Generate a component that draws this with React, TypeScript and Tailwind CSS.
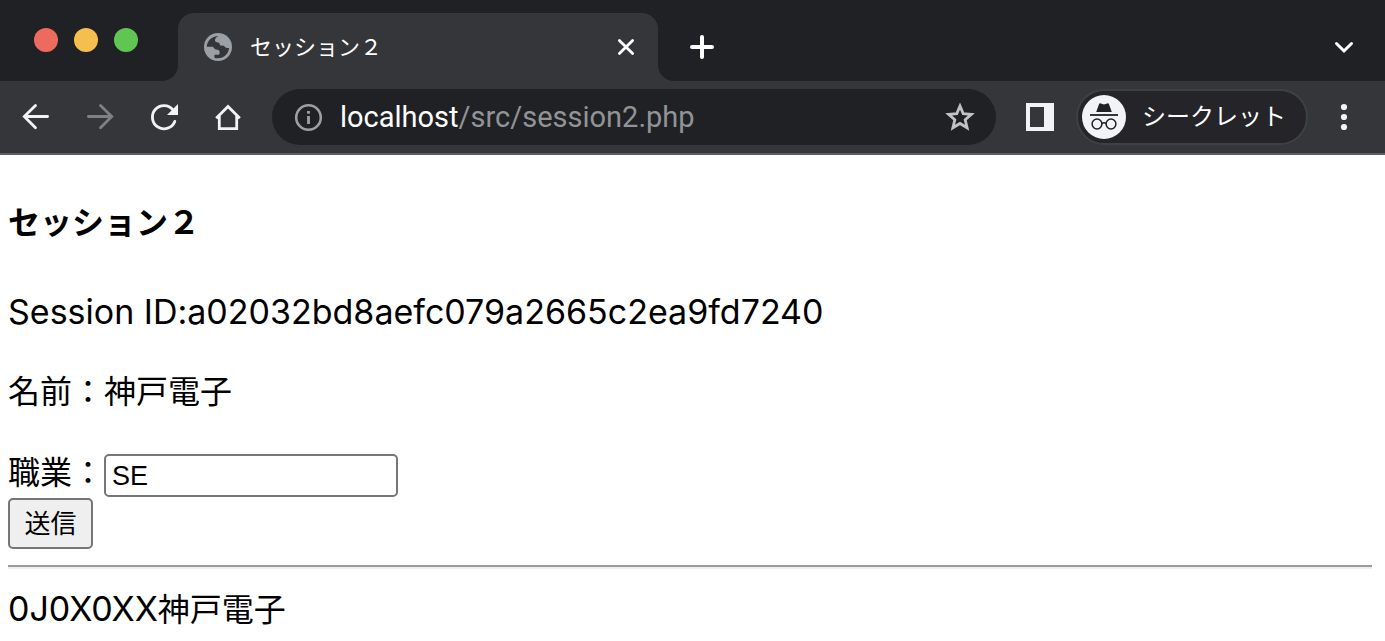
import type { ReactNode } from "react";

const chromeFont = "font-['Roboto','Noto_Sans_CJK_JP',sans-serif]";

function IconButton({ label, children }: { label: string; children: ReactNode }) {
  return (
    <button type="button" aria-label={label} className="flex size-8 shrink-0 items-center justify-center">
      {children}
    </button>
  );
}

function TabCurve({ side }: { side: "left" | "right" }) {
  return (
    <svg
      aria-hidden="true"
      viewBox="0 0 16 16"
      className={side === "left" ? "size-4 shrink-0 self-end" : "size-4 shrink-0 -scale-x-100 self-end"}
    >
      <path d="M16 0V16H0A16 16 0 0 0 16 0Z" fill="#35363a" />
    </svg>
  );
}

function Globe() {
  return (
    <svg aria-hidden="true" viewBox="0 0 28 28" className="size-7 shrink-0">
      <circle cx="14" cy="14" r="14" fill="#9aa0a6" />
      <path
        d="M2.8 13.7C2.8 8.4 7.6 3 14.6 3C12.4 4 11 5.4 11 7.2C11 8.6 12.2 9.4 14.2 9.4C16 9.5 15.2 12 17 12.6C18.4 13 19.6 12.2 20.6 13.4C21.6 14.6 23 15.2 25.1 15C24.6 20.6 20 25.3 13.6 25.2C12.4 25.2 11.4 25.1 10.4 24.7V21.8H13.4C15.6 21.8 15.8 20.6 15.6 18.9C15.4 17 14.2 16.6 12 16.4C10 16.2 10.2 13.7 8 13.7Z"
        fill="#35363a"
      />
    </svg>
  );
}

function Incognito() {
  return (
    <svg aria-hidden="true" viewBox="0 0 44 44" className="size-11 shrink-0">
      <circle cx="22" cy="22" r="22" fill="#f1f3f4" />
      <path d="M14.2 17L17 9.2C17.3 8.4 18 8.2 18.8 8.5L22 9.4L25.2 8.5C26 8.2 26.7 8.4 27 9.2L29.8 17Z" fill="#202124" />
      <g fill="none" stroke="#202124">
        <path d="M8 20H36" strokeWidth="1.8" />
        <circle cx="15" cy="29" r="4.9" strokeWidth="1.5" />
        <circle cx="29" cy="29" r="4.9" strokeWidth="1.5" />
        <path d="M19.8 28.6Q22 27 24.2 28.6" strokeWidth="1.5" />
      </g>
    </svg>
  );
}

function TabStrip() {
  return (
    <div className="flex h-[81px] bg-[#202124]">
      <div className="flex gap-4 pt-7 pr-6 pl-[34px]">
        <button type="button" aria-label="閉じる" className="size-6 rounded-full bg-[#ed6a5e]" />
        <button type="button" aria-label="最小化" className="size-6 rounded-full bg-[#f5bf4f]" />
        <button type="button" aria-label="最大化" className="size-6 rounded-full bg-[#61c554]" />
      </div>
      <TabCurve side="left" />
      <div className="mt-[13px] flex w-[480px] items-center rounded-t-2xl bg-[#35363a] pr-4 pl-[26px]">
        <Globe />
        <span className="ml-[18px] flex-1 text-[22px] text-white">セッション２</span>
        <IconButton label="タブを閉じる">
          <svg viewBox="0 0 32 32" className="size-8" stroke="#fff" strokeWidth="2.8" strokeLinecap="round">
            <path d="M9.4 9.4L22.6 22.6M22.6 9.4L9.4 22.6" />
          </svg>
        </IconButton>
      </div>
      <TabCurve side="right" />
      <div className="mt-[13px] flex flex-1 items-center justify-between pr-[25px] pl-3">
        <IconButton label="新しいタブ">
          <svg viewBox="0 0 32 32" className="size-8" stroke="#fff" strokeWidth="4" strokeLinecap="round">
            <path d="M16 6V26M6 16H26" />
          </svg>
        </IconButton>
        <IconButton label="タブを検索">
          <svg viewBox="0 0 32 32" className="size-8" fill="none" stroke="#fff" strokeWidth="3" strokeLinecap="round">
            <path d="M8.5 12.5L16 20L23.5 12.5" />
          </svg>
        </IconButton>
      </div>
    </div>
  );
}

function Toolbar() {
  return (
    <div className="flex h-[74px] items-center border-b-2 border-[#5d5e62] bg-[#35363a] pr-[25px] pl-5">
      <div className="flex gap-8">
        <IconButton label="戻る">
          <svg viewBox="0 0 32 32" className="size-8" fill="none" stroke="#f1f3f4" strokeWidth="2.8" strokeLinecap="round">
            <path d="M27.6 15.5H4.5M15.5 4.5L4.3 15.5L15.5 26.8" />
          </svg>
        </IconButton>
        <IconButton label="進む">
          <svg viewBox="0 0 32 32" className="size-8" fill="none" stroke="#7f8082" strokeWidth="2.8" strokeLinecap="round">
            <path d="M4.4 15.5H27.5M16.5 4.5L27.7 15.5L16.5 26.8" />
          </svg>
        </IconButton>
        <IconButton label="再読み込み">
          <svg viewBox="0 0 32 32" className="size-8" fill="none" stroke="#f1f3f4" strokeWidth="2.8" strokeLinecap="round">
            <path d="M26.8 20.4A11.6 11.6 0 1 1 25 8.8" />
            <path d="M30 3V14H19Z" fill="#f1f3f4" stroke="none" />
          </svg>
        </IconButton>
        <IconButton label="ホーム">
          <svg viewBox="0 0 32 32" className="size-8" fill="none" stroke="#f1f3f4" strokeWidth="2.8">
            <path d="M4.2 17.2L16 5.4L27.8 17.2M7.3 15V27.6H24.7V15" />
          </svg>
        </IconButton>
      </div>
      <div className="ml-7 flex h-14 min-w-0 flex-1 items-center rounded-full bg-[#202124] pr-5 pl-5">
        <svg aria-hidden="true" viewBox="0 0 32 32" className="size-8 shrink-0" fill="none" stroke="#9aa0a6" strokeWidth="2.6">
          <circle cx="16.5" cy="16.5" r="12.3" />
          <path d="M16.5 15V23M16.5 10V12.8" strokeWidth="2.8" />
        </svg>
        <a href="#page" className="ml-4 flex-1 text-[29px] leading-8 text-[#929396]">
          <span className="text-white">localhost</span>/src/session2.php
        </a>
        <IconButton label="ブックマーク">
          <svg viewBox="0 0 32 32" className="size-8" fill="none" stroke="#c1c2c4" strokeWidth="2.8">
            <path d="M16 5L19.2 12.6L27.4 13.3L21.2 18.7L23.1 26.8L16 22.5L8.9 26.8L10.8 18.7L4.6 13.3L12.8 12.6Z" />
          </svg>
        </IconButton>
      </div>
      <div className="ml-7 flex shrink-0 items-center">
        <IconButton label="サイドパネル">
          <svg viewBox="0 0 32 32" className="size-8">
            <path fillRule="evenodd" d="M2 2H30V30H2ZM6 6V26H20V6Z" fill="#f1f3f4" />
          </svg>
        </IconButton>
        <button
          type="button"
          className="ml-5 flex h-14 items-center rounded-full border-2 border-[#3f4044] bg-[#242429] pr-5 pl-1 text-[24px] text-white"
        >
          <Incognito />
          <span className="ml-4">シークレット</span>
        </button>
        <div className="ml-5">
          <IconButton label="メニュー">
            <svg viewBox="0 0 32 32" className="size-8" fill="#f1f3f4">
              <circle cx="16" cy="6" r="3.1" />
              <circle cx="16" cy="16" r="3.1" />
              <circle cx="16" cy="26" r="3.1" />
            </svg>
          </IconButton>
        </div>
      </div>
    </div>
  );
}

export default function App() {
  return (
    <div className="min-h-screen bg-white">
      <header className={chromeFont}>
        <TabStrip />
        <Toolbar />
      </header>
      <main
        id="page"
        className="flex flex-col pt-11 pr-[13px] pl-2 font-['Inter','Noto_Sans_CJK_JP',sans-serif] text-[32px] leading-[48px] text-black"
      >
        <h4 className="font-bold">セッション２</h4>
        <p className="mt-[41px] text-[34px]">Session ID:a02032bd8aefc079a2665c2ea9fd7240</p>
        <p className="mt-8">名前：神戸電子</p>
        <form className="mt-8 flex flex-col items-start gap-px" onSubmit={(e) => e.preventDefault()}>
          <div className="flex items-center">
            <label htmlFor="job">職業：</label>
            <input
              id="job"
              type="text"
              defaultValue="SE"
              className="mt-1.5 h-[43px] w-[294px] rounded-[5px] border-2 border-[#767676] bg-white px-1.5 font-['Liberation_Sans',sans-serif] text-[27px]"
            />
          </div>
          <button
            type="submit"
            className="h-[51px] w-[85px] rounded-[5px] border-2 border-[#767676] bg-[#efefef] text-[26px] leading-none"
          >
            送信
          </button>
        </form>
        <hr className="mt-4 border-t-2 border-b-2 border-t-[#9a9a9a] border-b-[#eeeeee]" />
        <p className="mt-4">
          <span className="text-[34px]">0J0X0XX</span>神戸電子
        </p>
      </main>
    </div>
  );
}
